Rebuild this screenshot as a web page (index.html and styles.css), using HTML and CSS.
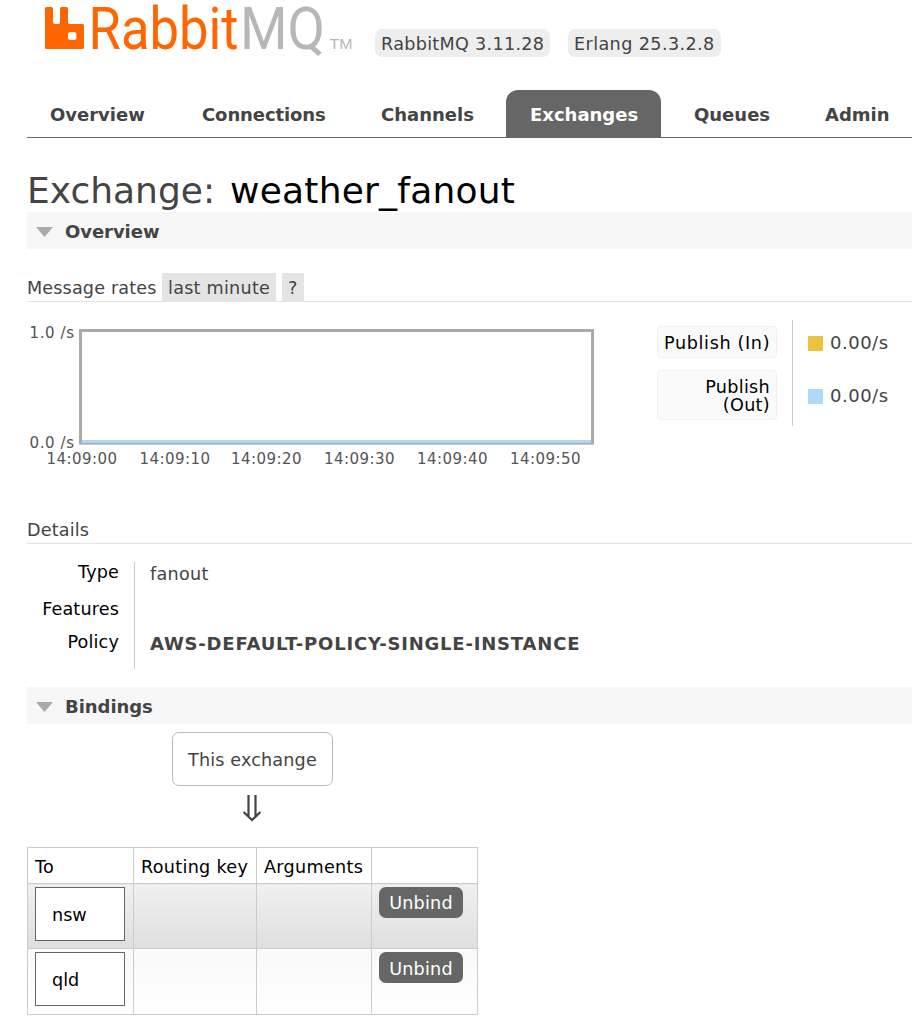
FILE: index.html
```html
<!DOCTYPE html>
<html lang="en">
<head>
<meta charset="utf-8">
<title>RabbitMQ Management</title>
<link rel="stylesheet" href="styles.css">
</head>
<body>
<header class="header">
  <svg class="logo" width="312" height="62" viewBox="0 0 312 62" role="img" aria-label="RabbitMQ TM">
    <path fill="#f60" fill-rule="evenodd" d="M1.500 7H6.500Q8 7 8 8.500V22Q8 24 10 24H13.500Q15 24 15 22V8.500Q15 7 16.500 7H21.500Q23 7 23 8.500V22Q23 24 25 24H37.500Q39 24 39 25.500V47.500Q39 49 37.500 49H1.500Q0 49 0 47.500V8.500Q0 7 1.500 7ZM26 32Q23 32 23 35V37.500Q23 40 26 40H28.500Q31.500 40 31.500 37.500V35Q31.500 32 28.500 32Z"/>
    <text class="logo-word" fill="#f60" x="43.500" y="49" textLength="150" lengthAdjust="spacingAndGlyphs">Rabbit</text>
    <text class="logo-word" fill="#b7b7b7" x="195" y="49" textLength="85" lengthAdjust="spacingAndGlyphs">MQ</text>
    <text class="logo-tm" fill="#b7b7b7" x="284.500" y="49" textLength="23" lengthAdjust="spacingAndGlyphs">TM</text>
  </svg>
  <span class="version version-server">RabbitMQ 3.11.28</span>
  <span class="version version-erlang">Erlang 25.3.2.8</span>
</header>
<nav class="tabs">
  <a class="tab tab-overview">Overview</a>
  <a class="tab tab-connections">Connections</a>
  <a class="tab tab-channels">Channels</a>
  <a class="tab tab-exchanges selected">Exchanges</a>
  <a class="tab tab-queues">Queues</a>
  <a class="tab tab-admin">Admin</a>
</nav>
<main class="main">
  <h1 class="title"><span class="title-kind">Exchange:</span><b class="title-name">weather_fanout</b></h1>
  <h2 class="section"><svg class="caret" width="17" height="10" viewBox="0 0 17 10"><path fill="#aaa" d="M0 0H17L8.500 10Z"/></svg>Overview</h2>
  <div class="rates-head"><span class="rates-label">Message rates</span><span class="chip chip-period">last minute</span><span class="chip chip-help">?</span></div>
  <div class="rates">
    <svg class="chart" width="570" height="160" viewBox="0 0 570 160">
      <rect x="53.500" y="10.500" width="512" height="113" fill="#fff" stroke="#aaa" stroke-width="3"/>
      <path fill="#ccc" d="M52 124H567V125H52Z"/>
      <path fill="#afd8f8" d="M55 120H564V123H55Z"/>
      <g class="axis">
        <text x="2.500" y="18" textLength="44.500">1.0 /s</text>
        <text x="2.500" y="128" textLength="44.500">0.0 /s</text>
        <text x="19.500" y="144" textLength="70.500">14:09:00</text>
        <text x="112.500" y="144" textLength="70.500">14:09:10</text>
        <text x="204" y="144" textLength="70.500">14:09:20</text>
        <text x="297" y="144" textLength="70.500">14:09:30</text>
        <text x="390" y="144" textLength="70.500">14:09:40</text>
        <text x="483" y="144" textLength="70.500">14:09:50</text>
      </g>
    </svg>
    <div class="legend">
      <div class="legend-names"><span class="legend-name legend-in">Publish (In)</span><span class="legend-name legend-tall">Publish (Out)</span></div>
      <div class="legend-values">
        <span class="legend-value"><i class="swatch swatch-in"></i>0.00/s</span>
        <span class="legend-value"><i class="swatch swatch-out"></i>0.00/s</span>
      </div>
    </div>
  </div>
  <h3 class="details-head">Details</h3>
  <div class="facts">
    <div class="fact-names"><span class="fact-type">Type</span><span class="fact-features">Features</span><span class="fact-policy">Policy</span></div>
    <div class="fact-values"><span class="fact-fanout">fanout</span><b class="fact-policy-name">AWS-DEFAULT-POLICY-SINGLE-INSTANCE</b></div>
  </div>
  <h2 class="section">
    <svg class="caret" width="17" height="10" viewBox="0 0 17 10"><path fill="#aaa" d="M0 0H17L8.500 10Z"/></svg>Bindings</h2>
  <div class="bindings">
    <div class="source">This exchange</div>
    <svg class="arrow" width="20" height="28" viewBox="0 0 20 28"><path d="M6.500 0V21M13.500 0V21M1.500 17L10 25L18.500 17" fill="none" stroke="#444" stroke-width="2.200"/></svg>
    <table class="list">
      <tr class="list-head"><th>To</th><th>Routing key</th><th>Arguments</th><th></th></tr>
      <tr class="odd"><td><span class="queue">nsw</span></td><td></td><td></td><td><button class="unbind">Unbind</button></td></tr>
      <tr class="even"><td><span class="queue">qld</span></td><td></td><td></td><td><button class="unbind">Unbind</button></td></tr>
    </table>
  </div>
</main>
</body>
</html>
```
FILE: styles.css
```css
* { box-sizing: border-box; }
body {
  margin: 0;
  height: 1032px;
  overflow: hidden;
  background: #fff;
  color: #444;
  font: 17.6px/20px Verdana, "DejaVu Sans", sans-serif;
  letter-spacing: .15px;
  white-space: nowrap;
}
.header { display: flex; align-items: flex-start; height: 90px; padding-left: 45px; }
.logo { flex: none; margin-right: 18px; overflow: visible; letter-spacing: 0; }
.logo-word { font: 59px Roboto, "Liberation Sans", sans-serif; }
.logo-tm { font: 15px "Liberation Sans", sans-serif; }
.version { height: 28px; margin-top: 29px; padding: 1px 6px 0; line-height: 29px; letter-spacing: .3px; background: #eee; border-radius: 7px; }
.version-server { width: 175px; margin-right: 18px; }
.version-erlang { width: 153px; letter-spacing: .4px; }
.tabs { display: flex; gap: 8px; height: 48px; margin-left: 27px; border-bottom: 1px solid #666; letter-spacing: 0; }
.tab { flex: none; height: 47px; padding: 0 0 0 24px; line-height: 49px; font-weight: bold; font-size: 18px; border-radius: 12px 12px 0 0; }
.tab-overview { width: 143px; padding-left: 23px; }
.tab-connections { width: 171px; letter-spacing: -.1px; }
.tab-channels { width: 141px; }
.tab-exchanges { width: 155px; }
.tab-queues { width: 124px; padding-left: 25px; }
.tab-admin { width: 112px; }
.selected { background: #666; color: #fff; }
.main { padding-left: 27px; }
.title { display: flex; height: 74px; margin: 0; padding-top: 30px; font-size: 36px; line-height: 46px; font-weight: normal; letter-spacing: 0; }
.title-kind { width: 203px; }
.title-name { font-weight: normal; color: #000; letter-spacing: .22px; }
.section { display: flex; align-items: center; height: 37px; margin: 0; padding: 2px 0 0 9px; background: #f7f7f7; font-size: 18px; line-height: 20px; letter-spacing: -.05px; }
.caret { margin-right: 12px; }
.rates-head { display: flex; height: 53px; padding-top: 24px; line-height: 30px; border-bottom: 1px solid #e4e4e4; }
.rates-label { width: 135px; }
.chip { height: 28px; padding-left: 6px; background: #e4e4e4; }
.chip-period { width: 114px; margin-right: 6px; letter-spacing: .25px; }
.chip-help { width: 22px; }
.rates { display: flex; height: 215px; padding-top: 18px; }
.chart { flex: none; letter-spacing: 0; }
.axis { font-size: 15px; fill: #545454; }
.legend { display: flex; margin-left: 60px; }
.legend-names { width: 136px; height: 106px; padding: 6px 15px 0 0; border-right: 1px solid #ccc; }
.legend-name { display: block; width: 120px; height: 32px; margin-bottom: 12px; padding: 7px 6px; border: 1px solid #f0f0f0; border-radius: 4px; background: #fafafa; color: #000; text-align: right; line-height: 18px; letter-spacing: .3px; }
.legend-in { letter-spacing: .65px; }
.legend-tall { height: 50px; white-space: normal; }
.legend-values { padding: 13px 0 0 15px; letter-spacing: .5px; font-size: 18px; }
.legend-value { display: flex; align-items: center; height: 20px; margin-bottom: 33px; }
.swatch { width: 15px; height: 15px; margin-right: 7px; }
.swatch-in { background: #edc240; }
.swatch-out { background: #afd8f8; }
.details-head { height: 27px; margin: 0; padding-top: 3px; font-size: 17.600px; font-weight: normal; border-bottom: 1px solid #e4e4e4; }
.facts { display: flex; height: 143px; padding-top: 18px; }
.fact-names { display: flex; flex-direction: column; width: 108px; height: 107px; padding-right: 15px; text-align: right; color: #000; border-right: 1px solid #ccc; }
.fact-type { height: 37px; }
.fact-features { height: 33px; }
.fact-values { display: flex; flex-direction: column; padding: 2px 0 0 15px; }
.fact-fanout { height: 70px; letter-spacing: .3px; }
.fact-policy-name { font-size: 18px; letter-spacing: .8px; }
.bindings { padding-top: 8px; }
.source { width: 161px; height: 54px; margin-left: 145px; padding-left: 15px; line-height: 54px; border: 1px solid #bbb; border-radius: 7px; }
.arrow { display: block; margin: 9px 0 24px 215px; }
.list { width: 451px; border-collapse: collapse; table-layout: fixed; }
.list th, .list td { padding: 3px 7px; border: 1px solid #ccc; text-align: left; vertical-align: top; }
.list th { height: 36px; padding-top: 9px; color: #000; font-weight: normal; letter-spacing: .3px; }
.list th:nth-child(1) { width: 106px; }
.list th:nth-child(2) { width: 123px; }
.list th:nth-child(3) { width: 115px; }
.list td { height: 65px; }
.odd td { background: linear-gradient(#f0f0f0, #dfdfdf); }
.even td { height: 66px; background: linear-gradient(#f8f8f8, #fff); }
.queue { display: block; width: 90px; height: 54px; padding-left: 16px; line-height: 54px; border: 1px solid #666; background: #fff; color: #000; letter-spacing: 0; }
.unbind { display: block; width: 84px; height: 31px; padding: 0; border: 0; border-radius: 7px; background: #666; color: #fff; font: inherit; letter-spacing: .2px; }
.even .unbind { padding-top: 2px; }
```
